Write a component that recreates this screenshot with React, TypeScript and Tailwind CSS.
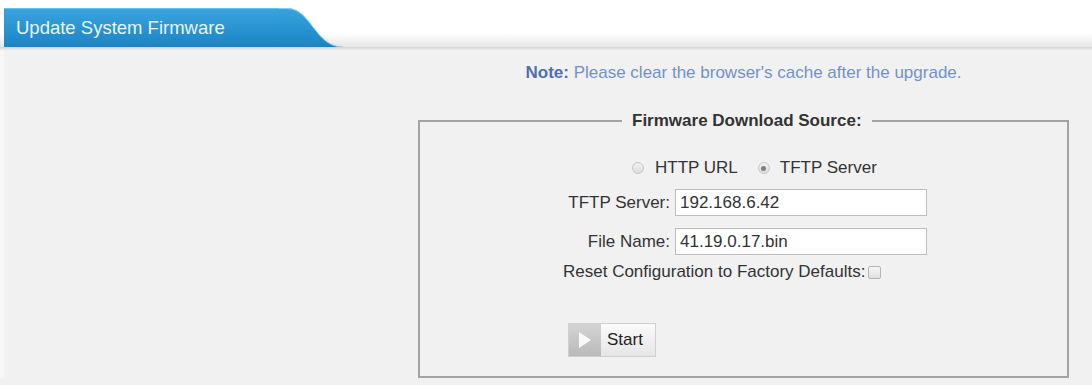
import React, { useState } from 'react'

const font = { fontFamily: '"Liberation Sans", Arial, sans-serif' }

const Radio: React.FC<{ checked: boolean; onClick: () => void }> = ({ checked, onClick }) => (
    <span
        onClick={onClick}
        className="inline-flex items-center justify-center w-[12px] h-[12px] rounded-full border border-[#c8c8c8] bg-gradient-to-b from-[#f2f2f2] to-[#dcdcdc] cursor-pointer shrink-0"
    >
        {checked && <span className="w-[5px] h-[5px] rounded-full bg-[#808080]" />}
    </span>
)

const App: React.FC = () => {
    const [source, setSource] = useState<'http' | 'tftp'>('tftp')
    const [server, setServer] = useState('192.168.6.42')
    const [file, setFile] = useState('41.19.0.17.bin')
    const [reset, setReset] = useState(false)

    return (
        <div className="min-h-screen bg-[#f1f1f1] text-[#333]" style={font}>
            {/* Header with tab */}
            <div className="h-[47px] bg-gradient-to-b from-white from-70% to-[#e6e6e6] flex items-end pl-[4px]">
                <div className="flex items-end">
                    <div className="h-[39px] w-[275px] bg-gradient-to-b from-[#38a4de] to-[#1a84c6] flex items-center pl-[12px] border-t border-[#6cc0ec]">
                        <span className="text-[18.5px] text-[#e9f5fc] leading-none whitespace-nowrap">
                            Update System Firmware
                        </span>
                    </div>
                    <svg width="66" height="39" viewBox="0 0 66 39" className="block">
                        <defs>
                            <linearGradient id="tabg" x1="0" y1="0" x2="0" y2="1">
                                <stop offset="0" stopColor="#38a4de" />
                                <stop offset="1" stopColor="#1a84c6" />
                            </linearGradient>
                        </defs>
                        <path d="M0 0 H8 C32 0 36 39 64 39 H0 Z" fill="url(#tabg)" />
                        <path d="M0 0.5 H8 C32 0.5 36 39 64 39" fill="none" stroke="#8ccdf0" strokeWidth="1" />
                    </svg>
                </div>
            </div>
            <div className="h-[3px] bg-gradient-to-b from-[#d4d4d4] to-[#ececec]" />

            {/* Content */}
            <div className="flex border-l-[4px] border-[#f7f7f7]">
                <div className="w-[414px] shrink-0" />
                <div className="flex flex-col w-[651px]">
                    <p className="text-[17px] leading-[20px] mt-[13px] text-center whitespace-nowrap text-[#7391c9]">
                        <span className="font-bold text-[#4f6fb4]">Note:</span> Please clear the browser's cache after the upgrade.
                    </p>

                    <fieldset className="mt-[28px] border-2 border-[#a3a3a3] pb-[19px]">
                        <legend className="ml-[202px] px-[10px] text-[17px] leading-[20px] font-bold text-[#333]">
                            Firmware Download Source:
                        </legend>

                        <div className="flex flex-col pt-[27px] text-[17px]">
                            <div className="flex items-center h-[20px] pl-[212px]">
                                <Radio checked={source === 'http'} onClick={() => setSource('http')} />
                                <span className="ml-[11px]">HTTP URL</span>
                                <span className="ml-[20px] flex">
                                    <Radio checked={source === 'tftp'} onClick={() => setSource('tftp')} />
                                </span>
                                <span className="ml-[10px]">TFTP Server</span>
                            </div>

                            <div className="flex items-center mt-[11px] gap-[5px]">
                                <label className="w-[250px] text-right">TFTP Server:</label>
                                <input
                                    value={server}
                                    onChange={e => setServer(e.target.value)}
                                    className="w-[252px] h-[27px] bg-white border border-[#bdbdbd] px-[4px] text-[17px] text-[#333] outline-none"
                                />
                            </div>

                            <div className="flex items-center mt-[12px] gap-[5px]">
                                <label className="w-[250px] text-right">File Name:</label>
                                <input
                                    value={file}
                                    onChange={e => setFile(e.target.value)}
                                    className="w-[252px] h-[27px] bg-white border border-[#bdbdbd] px-[4px] text-[17px] text-[#333] outline-none"
                                />
                            </div>

                            <div className="flex items-center h-[20px] mt-[7px] pl-[143px]">
                                <span>Reset Configuration to Factory Defaults:</span>
                                <span
                                    onClick={() => setReset(!reset)}
                                    className="ml-[3px] w-[13px] h-[13px] rounded-[2px] border border-[#b5b5b5] bg-gradient-to-b from-[#f6f6f6] to-[#e0e0e0] flex items-center justify-center text-[10px] leading-none cursor-pointer"
                                >
                                    {reset ? '✓' : ''}
                                </span>
                            </div>

                            <div className="mt-[41px] pl-[148px]">
                                <button className="flex items-stretch h-[34px] w-[88px] border border-[#d0d0d0] bg-gradient-to-b from-[#fbfbfb] to-[#e6e6e6]">
                                    <span className="w-[32px] bg-gradient-to-b from-[#d4d4d4] to-[#bababa] flex items-center justify-center">
                                        <svg width="14" height="18" viewBox="0 0 14 18">
                                            <path d="M1 1 L13 9 L1 17 Z" fill="#fafafa" />
                                        </svg>
                                    </span>
                                    <span className="flex items-center pl-[6px] text-[17px] text-[#222]">Start</span>
                                </button>
                            </div>
                        </div>
                    </fieldset>
                </div>
            </div>
        </div>
    )
}

export default App
